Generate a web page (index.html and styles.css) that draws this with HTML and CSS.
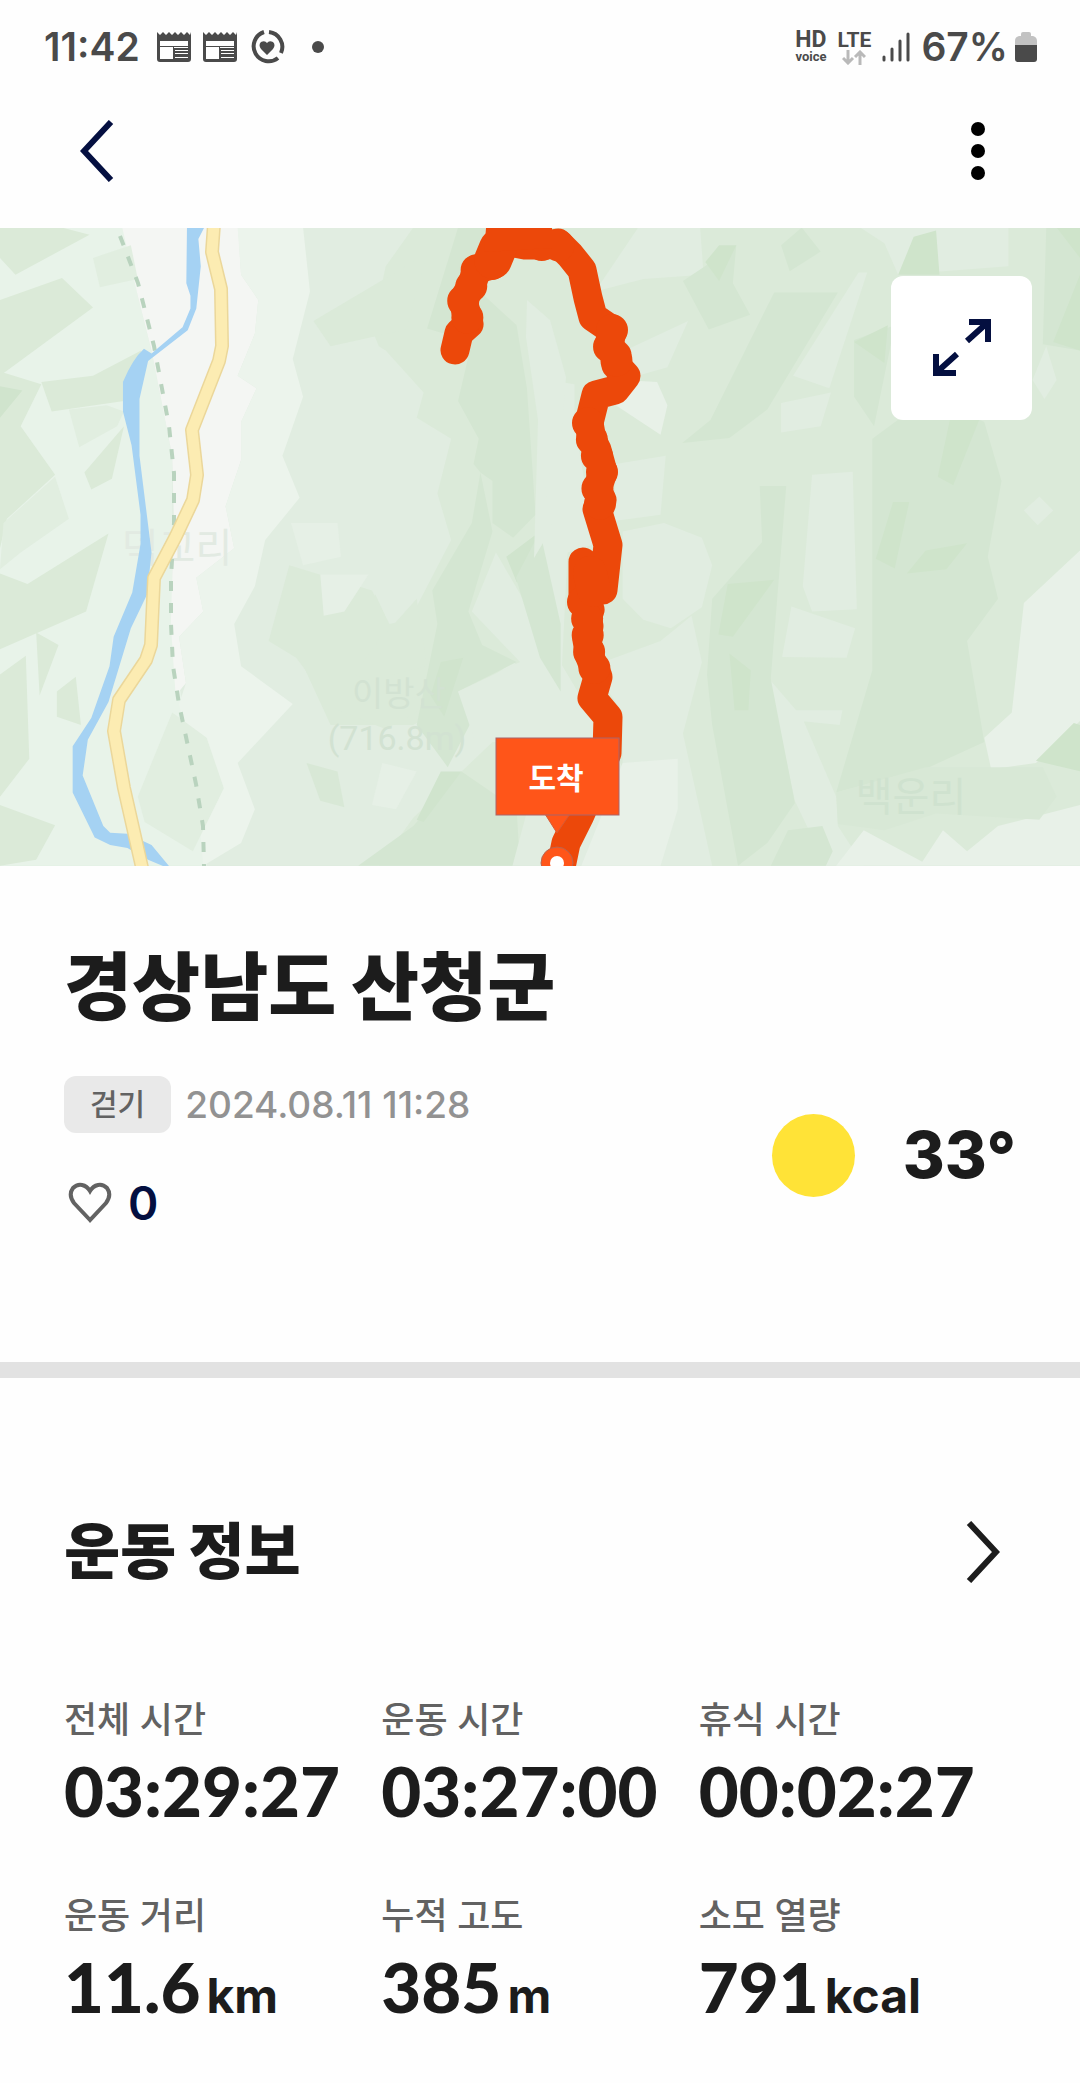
FILE: index.html
```html
<!DOCTYPE html>
<html lang="ko">
<head>
    <meta charset="UTF-8">
    <meta name="viewport" content="width=device-width, initial-scale=1.0">
    <title>경상남도 산청군</title>
    <link rel="stylesheet" href="styles.css">
</head>
<body>
    <div class="status-bar">
        <div class="status-left">
            <span class="clock">11:42</span>
            <svg class="status-icon" width="34" height="36" viewBox="0 0 34 36">
                <path fill="#4a4a4a" fill-rule="evenodd" d="M0 3l3 3 3-3 3 3 3-3 3 3 3-3 3 3 3-3 3 3 3-3 3 3 1-3v27q0 3-3 3H3q-3 0-3-3zM3 12v5h28v-5zM3 18v12h13V18zM17 18v1h14v-1zM18 21v1h13v-1zM18 24v1h13v-1zM18 28v1h13v-1z"/>
            </svg>
            <svg class="status-icon" width="34" height="36" viewBox="0 0 34 36">
                <path fill="#4a4a4a" fill-rule="evenodd" d="M0 3l3 3 3-3 3 3 3-3 3 3 3-3 3 3 3-3 3 3 3-3 3 3 1-3v27q0 3-3 3H3q-3 0-3-3zM3 12v5h28v-5zM3 18v12h13V18zM17 18v1h14v-1zM18 21v1h13v-1zM18 24v1h13v-1zM18 28v1h13v-1z"/>
            </svg>
            <svg class="status-icon" width="36" height="36" viewBox="0 0 36 36">
                <path fill="none" stroke="#4a4a4a" stroke-width="4" d="M15 3A15 15 0 1 0 29 29M20 3A15 15 0 0 1 32 24"/>
                <path fill="#4a4a4a" d="M18 26l-6-6q-3-4 0-7 4-2 6 1 2-3 6-1 3 3 0 7z"/>
            </svg>
            <span class="status-dot"></span>
        </div>
        <div class="status-right">
            <div class="hd"><span class="hd-top">HD</span><span class="hd-bottom">voice</span></div>
            <div class="lte">
                <span class="lte-top">LTE</span>
                <svg width="24" height="15" viewBox="0 0 24 15">
                    <path fill="none" stroke="#b9b9b9" stroke-width="3" d="M6 0v13M1 8l5 5 5-5M18 15V2M13 7l5-5 5 5"/>
                </svg>
            </div>
            <svg class="signal" width="28" height="30" viewBox="0 0 28 30">
                <path fill="none" stroke="#4a4a4a" stroke-width="3" stroke-linecap="round" d="M2 25v3M10 17v11M18 9v19M26 2v26"/>
            </svg>
            <span class="percent">67%</span>
            <svg width="22" height="30" viewBox="0 0 22 30">
                <path fill="#c2c2c2" d="M6 2q0-2 2-2h6q2 0 2 2v2h2q4 1 4 5v5H0V9q0-4 4-5h2z"/>
                <path fill="#4a4a4a" d="M0 13h22v14q0 3-3 3H3q-3 0-3-3z"/>
            </svg>
        </div>
    </div>

    <header class="header">
        <button class="icon-button" type="button" aria-label="뒤로">
            <svg width="34" height="62" viewBox="0 0 34 62">
                <path fill="none" stroke="#040f40" stroke-width="6" d="M31 2L4 31l27 29"/>
            </svg>
        </button>
        <button class="icon-button" type="button" aria-label="더보기">
            <svg width="14" height="60" viewBox="0 0 14 60">
                <circle cx="7" cy="8" r="7"/>
                <circle cx="7" cy="30" r="7"/>
                <circle cx="7" cy="52" r="7"/>
            </svg>
        </button>
    </header>

    <div class="map">
        <svg class="map-image" viewBox="0 0 1080 638">
            <rect width="1080" height="638" fill="#dbead9"/>

            <!-- terrain, west side -->
            <g transform="translate(0 -8) scale(.3444 .4209)">
                <path fill="#e1ede1" d="M0 0H1100L1200 18 1120 110 1080 260 1100 300 1120 310 1230 410 1210 470 1310 520 1270 650 1310 760 1190 950 1130 960 1090 890 960 1050 870 1040 960 1200 1200 1200 1350 1130 1490 1050 1568 1100V1240H1430L1200 1420 1100 1534H0z"/>
                <path fill="#e8f3e9" d="M0 0H360L400 180 440 310 500 560 500 1000 530 1150 600 1534H0z"/>
                <path fill="#f4f6f3" d="M350 0H690L700 130 750 190 740 270 690 370 745 400 700 480 700 570 655 680 680 780 570 850 590 930 520 990 540 1100 510 1130 496 960 505 720 500 560 440 310 400 180z"/>
                <path fill="#ecf4ec" d="M690 18H880L900 170 850 330 880 420 820 560 870 660 770 760 740 870 680 960 700 1060 850 1150 690 1290 740 1400 700 1480 590 1534 570 1340 520 1150 540 1100 520 990 590 930 570 850 680 780 655 680 700 570 700 480 745 400 690 370 740 270 750 190 700 130z"/>
                <path fill="#dbead8" d="M0 18H180L260 35 45 130 0 90zM0 190L180 138 270 208 0 370zM0 360L120 390 60 490 160 605 20 710 0 780zM120 385L270 370 410 310 360 430 150 455zM245 600L360 490 325 615 265 640zM0 840L80 865 315 745 250 930 0 1020zM0 1080L75 1035 85 1280 0 1370zM105 980L170 1010 115 1130zM165 1120L220 1085 235 1200 165 1180zM0 1390L160 1438 105 1520 0 1534z"/>
                <path fill="#e1eee0" d="M200 450L310 440 360 455 340 490 230 540zM270 90L380 60 400 140 290 160zM10 720L160 610 200 710 60 790 0 830zM400 1370L500 1170 600 1230 650 1350 560 1500 420 1430z"/>
                <path fill="#dbead9" d="M840 820L1080 880 1130 960 1030 1080 1250 1150 1120 1210 970 1160 860 1040 780 1000zM1210 900L1240 1060 1140 1080 1090 1010zM910 240L1240 80 1180 260 960 300z"/>
                <path fill="#e6f0e6" d="M845 720H980L990 800 880 820zM930 842H1070L1000 930 940 940zM1110 1290L1210 1310 1150 1400 1080 1390z"/>
                <path fill="#d4e6d2" d="M1330 18H1410L1380 160 1500 250 1530 400 1555 700 1490 755 1430 720 1430 620 1395 600 1430 740 1360 930 1400 1010 1500 1050 1330 1120 1370 1190 1300 1300 1210 1200 1270 960 1255 880 1370 720 1395 600 1375 580 1390 520 1330 430 1370 290 1240 258zM1340 1310L1500 1400 1510 1534H1040L1200 1440z"/>
                <path fill="#d0e4cd" d="M0 395L65 405 0 470zM1470 800L1568 740V880L1500 860zM1280 1050L1345 1040 1290 1180 1250 1130zM1280 1310H1340L1230 1430 1210 1425z"/>
                <path fill="#d8e8d6" d="M890 1290L980 1310 1000 1395 930 1380z"/>
                <path fill="#e1ede1" d="M1440 790L1568 970V1240H1380L1330 1120 1510 1050 1370 930z"/>
            </g>

            <!-- terrain, east side -->
            <g transform="translate(540 -8) scale(.3444 .4209)">
                <path fill="#e1ede1" d="M285 18H465L475 130 300 140 160 170zM220 320L430 240 370 350 240 380zM0 620L60 385 100 390 100 480 160 770 80 790 60 1120 0 1050zM220 580L365 560 350 700 215 715zM240 740L360 720 470 755 500 820 470 920 380 970 300 950 240 900zM440 940L470 1050 415 1220 500 1534H-80L0 1290V970L240 1300 240 1170 150 1060 350 1000zM665 1090L760 1180 860 1370 865 1440 940 1534H830L740 1380zM925 125H950L840 400 735 370zM700 435L845 410 815 490 700 505zM790 605L908 598 920 925 790 930 763 870zM730 918L915 970 890 1040 703 1038zM730 1165H878L870 1200 750 1190zM930 18H1360L1360 110 1040 130 1000 55zM1450 657L1490 690 1445 725 1405 690zM1430 380L1470 300 1500 380 1465 425z"/>
                <path fill="#e8f1e8" d="M1568 785L1405 910 1370 1170 1290 1230 1310 1305 1440 1290 1568 1190zM940 1450L1110 1525 1170 1450 1240 1500 1330 1440 1568 1390V1534H860zM240 380L340 385 370 440 350 510 220 440zM240 1290L400 1280 400 1400 350 1534H120z"/>
                <path fill="#d4e6d2" d="M680 172H865L660 450 550 518 413 530 495 475zM638 632H715L670 1090 740 1385 660 1480 575 1534 500 1200 485 1080 500 900 645 765zM965 520L1130 420 1290 480 1340 620 1300 800 1330 900 1240 1000 1290 1240 1130 1300 860 1360 965 1070zM912 285L1030 250 970 490 912 420zM415 145L570 60 560 150 610 225 490 260zM700 60L760 18 815 75 725 122zM0 740L60 960 60 1120 0 1040-70 850zM670 1534L720 1450 820 1440 850 1500 830 1534zM1470 18H1568V310L1460 295z"/>
                <path fill="#d8e8d6" d="M860 1360L1120 1300 1460 1300 1500 1370 1450 1425 1150 1410 1000 1450 865 1435z"/>
                <path fill="#cfe4cb" d="M1085 40L1150 25 1160 130 1040 130zM912 290L1010 250 1000 340zM1025 670H1072L1030 828 975 805zM1065 840L1120 785 1240 768 1180 830zM545 865L680 855 560 990 518 985zM550 1030L612 1070 605 1165H565zM1190 475H1275L1200 630 1155 610zM480 100L520 60 570 60 520 145zM1500 18H1568V90zM1490 290L1568 130V310zM1440 1285L1550 1195 1568 1200V1310z"/>
            </g>
            <path fill="#e1ede1" d="M527 72L550 92 566 149 562 200 545 262 552 300 534 330 538 192 526 109z"/>

            <g class="map-label">
                <text x="177" y="334" font-size="40" fill="#e2eae2">덕교리</text>
                <text x="399" y="478" font-size="34" fill="#d2e2d2">이방산</text>
                <text class="elevation" x="397" y="522" font-size="34" fill="#d2e2d2">(716.8m)</text>
                <text x="911" y="583" font-size="40" fill="#cfe2cf">백운리</text>
            </g>

            <!-- railway, river, road -->
            <path fill="none" stroke="#b9d3be" stroke-width="4" stroke-dasharray="10 12" d="M120 8L138 55 154 118 169 198 174 245V295L171 350V396L173 438 179 476 196 556 203 598 204 638"/>
            <path fill="#a5d2f3" transform="translate(0 -8) scale(.3444 .4209)" d="M543 10L598 10 576 45 583 110 570 210 545 262 430 335 405 425V560L440 790 427 890 380 970 315 1145 255 1235 240 1320 300 1440 320 1456 370 1458 440 1485 500 1544 430 1520 370 1492 320 1485 275 1467 211 1360V1250L265 1183 318 1060 330 990 384 885 408 770V700L382 535 357 455V385Q385 330 418 306L440 317 530 255 553 210V180L541 150z"/>
            <path fill="none" stroke="#ebd79a" stroke-width="14" stroke-linejoin="round" d="M214-4L212 24 221 61 222 118 219 133 192 202 197 247 193 272 176 308 154 350 151 417 146 432 119 472 114 503 124 560 143 644"/>
            <path fill="none" stroke="#fcecb2" stroke-width="11" stroke-linejoin="round" d="M214-4L212 24 221 61 222 118 219 133 192 202 197 247 193 272 176 308 154 350 151 417 146 432 119 472 114 503 124 560 143 644"/>

            <!-- walked route, the dotted line gives it the bumpy edge -->
            <g fill="none" stroke="#ec480a" stroke-linecap="round" stroke-linejoin="round">
                <path stroke-width="29" d="M455 122L459 105 469 96 463 72 471 59 477 41 492 37 499 12 525 17 547 17 558 15 570 27 582 42 588 70 593 89 612 102 609 119 617 127 616 137 626 148 615 162 596 167 589 195 592 212 597 222 603 244 597 262 602 272 597 281 608 317 603 362 583 334V374L590 382 587 390 589 398 587 412 590 429 598 449 592 470 608 489 607 525 580 587 566 615 560 644"/>
                <path stroke-width="32" stroke-dasharray="0 17" d="M492 36L477 41 471 59 463 72 469 96M525 14L542 17 558 17 570 30M612 102L609 119 617 127 616 137M588 195L592 212 602 244 597 262 602 272 597 281M583 374L587 390 589 398 587 412 590 429 598 449"/>
                <path stroke-width="38" d="M493 32L498 20"/>
                <path stroke-width="34" d="M590 345L594 362"/>
            </g>
            <path fill="#ec480a" d="M486 0H552V20L484 24zM583 340H603V374H583z"/>

            <!-- arrival marker -->
            <path fill="#ff5519" stroke="#d65b35" d="M545 586H570L557 605z"/>
            <rect x="496" y="510" width="123" height="77" fill="#ff5519" stroke="#a9656a"/>
            <text class="marker-text" x="556" y="561" font-size="30">도착</text>
            <circle cx="557" cy="635" r="16" fill="#ff5519" stroke="#b9654f"/>
            <circle cx="557" cy="635" r="7" fill="#fff"/>
        </svg>
        <button class="expand-button" type="button" aria-label="지도 확대">
            <svg width="60" height="60" viewBox="0 0 60 60">
                <path fill="none" stroke="#040f40" stroke-width="6" d="M37 4H56V24M55 5L35 23M4 36V55H24M5 54L25 36"/>
            </svg>
        </button>
    </div>

    <main>
        <section class="summary">
            <h1>경상남도 산청군</h1>
            <div class="summary-row">
                <div class="summary-info">
                    <div class="meta">
                        <span class="badge">걷기</span>
                        <span class="date">2024.08.11 11:28</span>
                    </div>
                    <button class="like" type="button" aria-label="좋아요">
                        <svg width="44" height="42" viewBox="0 0 44 42">
                            <path fill="none" stroke="#626262" stroke-width="4" d="M22 38L6 21Q0 13 5 6 9 2 14 3 19 4 22 9 25 4 30 3 35 2 39 6 44 13 38 21z"/>
                        </svg>
                        <span>0</span>
                    </button>
                </div>
                <div class="weather">
                    <span class="sun"></span>
                    <span class="temperature">33°</span>
                </div>
            </div>
        </section>

        <section class="workout">
            <div class="workout-header">
                <h2>운동 정보</h2>
                <a class="more" href="#" aria-label="운동 정보 더보기">
                    <svg width="34" height="62" viewBox="0 0 34 62">
                        <path fill="none" stroke="#1c1c1c" stroke-width="6" d="M3 2L30 31 3 60"/>
                    </svg>
                </a>
            </div>
            <dl class="stats">
                <div>
                    <dt>전체 시간</dt>
                    <dd>03:29:27</dd>
                </div>
                <div>
                    <dt>운동 시간</dt>
                    <dd>03:27:00</dd>
                </div>
                <div>
                    <dt>휴식 시간</dt>
                    <dd>00:02:27</dd>
                </div>
                <div>
                    <dt>운동 거리</dt>
                    <dd>11.6<span class="unit">km</span></dd>
                </div>
                <div>
                    <dt>누적 고도</dt>
                    <dd>385<span class="unit">m</span></dd>
                </div>
                <div>
                    <dt>소모 열량</dt>
                    <dd>791<span class="unit">kcal</span></dd>
                </div>
            </dl>
        </section>
    </main>
</body>
</html>
```

FILE: styles.css
```css
* {
    box-sizing: border-box;
}
body {
    margin: 0;
    background-color: #fefefe;
    color: #1c1c1c;
    font-family: Inter, "Noto Sans CJK KR", sans-serif;
}
svg {
    display: block;
}
button {
    padding: 0;
    border: none;
    background: none;
    font-family: inherit;
    cursor: pointer;
}

/* Status bar */
.status-bar {
    display: flex;
    justify-content: space-between;
    padding: 24px 43px 4px 44px;
    color: #4a4a4a;
}
.status-left,
.status-right {
    display: flex;
    align-items: center;
    height: 46px;
}
.status-left {
    gap: 12px;
}
.clock,
.percent {
    font-size: 39px;
    font-weight: 600;
    line-height: 46px;
}
.clock {
    margin-right: 5px;
}
.status-dot {
    width: 12px;
    height: 12px;
    margin-left: 15px;
    border-radius: 50%;
    background-color: #4a4a4a;
}
.status-right {
    gap: 11px;
}
.hd,
.lte {
    display: flex;
    flex-direction: column;
    align-items: center;
}
.hd-top,
.lte-top {
    font-family: Roboto, sans-serif;
    font-size: 21px;
    font-weight: 700;
    line-height: 20px;
}
.hd-top {
    font-size: 23px;
}
.hd-bottom {
    font-family: Roboto, sans-serif;
    font-size: 13px;
    font-weight: 700;
    line-height: 14px;
}
.percent {
    margin-right: -4px;
}

/* Header */
.header {
    display: flex;
    align-items: center;
    justify-content: space-between;
    height: 154px;
    padding: 0 95px 0 80px;
}

/* Map */
.map {
    position: relative;
}
.map-image {
    width: 100%;
    height: auto;
}
.map-label {
    font-family: "Noto Sans CJK KR", sans-serif;
    text-anchor: middle;
}
.elevation {
    font-family: Roboto, sans-serif;
}
.marker-text {
    fill: #fff;
    font-family: "Noto Sans CJK KR", sans-serif;
    font-weight: 700;
    text-anchor: middle;
}
.expand-button {
    position: absolute;
    top: 48px;
    right: 48px;
    display: flex;
    align-items: center;
    justify-content: center;
    width: 141px;
    height: 144px;
    border-radius: 12px;
    background-color: #fff;
}

/* Summary */
.summary {
    padding: 77px 64px 130px;
    border-bottom: 16px solid #e2e2e2;
}
h1 {
    margin: 0 0 45px;
    font-size: 74px;
    font-weight: 900;
    line-height: 88px;
}
.summary-row {
    display: flex;
    align-items: center;
    justify-content: space-between;
}
.meta {
    display: flex;
    align-items: center;
    gap: 14px;
    margin-bottom: 41px;
}
.badge {
    padding: 0 26px;
    border-radius: 12px;
    background-color: #e9e9e9;
    color: #626262;
    font-size: 30px;
    font-weight: 500;
    line-height: 57px;
}
.date {
    color: #929292;
    font-size: 37px;
    font-weight: 500;
    line-height: 57px;
}
.like {
    display: flex;
    align-items: center;
    gap: 16px;
    height: 58px;
    padding-left: 4px;
    color: #040f40;
    font-size: 46px;
    font-weight: 600;
    line-height: 58px;
}
.weather {
    display: flex;
    align-items: center;
    gap: 48px;
    padding-top: 2px;
}
.sun {
    width: 83px;
    height: 83px;
    border-radius: 50%;
    background-color: #ffe337;
}
.temperature {
    font-size: 64px;
    font-weight: 800;
    line-height: 80px;
}

/* Workout info */
.workout {
    padding: 138px 64px 55px;
}
.workout-header {
    display: flex;
    align-items: center;
    justify-content: space-between;
    margin-bottom: 112px;
    padding-right: 16px;
}
h2 {
    margin: 0;
    font-size: 61px;
    font-weight: 900;
    line-height: 72px;
}
.stats {
    display: grid;
    grid-template-columns: repeat(3, 1fr);
    row-gap: 65px;
    margin: 0;
}
dt {
    margin-bottom: 11px;
    color: #626262;
    font-size: 36px;
    font-weight: 500;
    line-height: 40px;
}
dd {
    margin: 0;
    font-family: Lato, sans-serif;
    font-size: 69px;
    font-weight: 900;
    line-height: 80px;
    white-space: nowrap;
}
.unit {
    margin-left: 6px;
    font-family: Inter, sans-serif;
    font-size: 48px;
    font-weight: 700;
    line-height: 48px;
}
```
